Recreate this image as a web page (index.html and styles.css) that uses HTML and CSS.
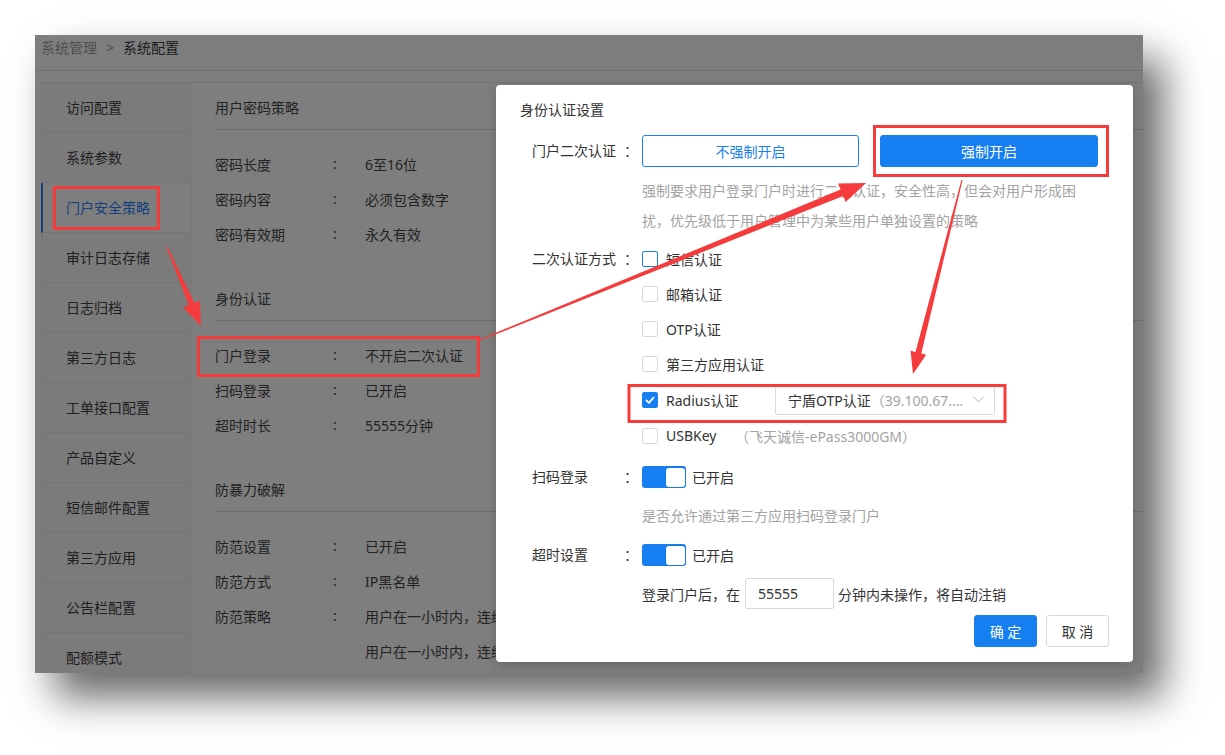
FILE: index.html
```html
<!DOCTYPE html>
<html lang="zh-CN">
<head>
  <meta charset="UTF-8" />
  <meta name="viewport" content="width=device-width,initial-scale=1.0" />
  <title>系统配置</title>
  <link rel="stylesheet" href="styles.css">
</head>
<body>
  <!-- Screenshot of the page, dimmed behind the dialog -->
  <div class="shot">
    <div class="crumb">
      <span class="crumb-parent">系统管理</span>
      <span class="crumb-sep">&gt;</span>
      <span class="crumb-current">系统配置</span>
    </div>

    <div class="main">
      <div class="side">
        <div class="side-item">访问配置</div>
        <div class="side-item">系统参数</div>
        <div class="side-item active">门户安全策略</div>
        <div class="side-item">审计日志存储</div>
        <div class="side-item">日志归档</div>
        <div class="side-item">第三方日志</div>
        <div class="side-item">工单接口配置</div>
        <div class="side-item">产品自定义</div>
        <div class="side-item">短信邮件配置</div>
        <div class="side-item">第三方应用</div>
        <div class="side-item">公告栏配置</div>
        <div class="side-item">配额模式</div>
      </div>

      <div class="panel">
        <div class="section">
          <div class="section-title">用户密码策略</div>
          <div class="info-list">
            <div class="info-row"><span class="info-label">密码长度</span><span class="info-colon">:</span><span>6至16位</span></div>
            <div class="info-row"><span class="info-label">密码内容</span><span class="info-colon">:</span><span>必须包含数字</span></div>
            <div class="info-row"><span class="info-label">密码有效期</span><span class="info-colon">:</span><span>永久有效</span></div>
          </div>
        </div>

        <div class="section">
          <div class="section-title">身份认证</div>
          <div class="info-list">
            <div class="info-row"><span class="info-label">门户登录</span><span class="info-colon">:</span><span>不开启二次认证</span></div>
            <div class="info-row"><span class="info-label">扫码登录</span><span class="info-colon">:</span><span>已开启</span></div>
            <div class="info-row"><span class="info-label">超时时长</span><span class="info-colon">:</span><span>55555分钟</span></div>
          </div>
        </div>

        <div class="section">
          <div class="section-title">防暴力破解</div>
          <div class="info-list">
            <div class="info-row"><span class="info-label">防范设置</span><span class="info-colon">:</span><span>已开启</span></div>
            <div class="info-row"><span class="info-label">防范方式</span><span class="info-colon">:</span><span>IP黑名单</span></div>
            <div class="info-row"><span class="info-label">防范策略</span><span class="info-colon">:</span><span>用户在一小时内，连续登录失败5次，锁定IP</span></div>
            <div class="info-row"><span class="info-label"></span><span class="info-colon"></span><span>用户在一小时内，连续登录失败10次，锁定账号</span></div>
          </div>
        </div>
      </div>
    </div>

    <!-- Dialog -->
    <div class="modal">
      <div class="modal-title">身份认证设置</div>

      <div class="form">
        <div class="form-row">
          <div class="form-label h32"><span class="form-name">门户二次认证</span><span class="form-colon">：</span></div>
          <div class="form-ctrl">
            <div class="choice">
              <button class="btn btn-line wide">不强制开启</button>
              <button class="btn btn-blue wide2">强制开启</button>
            </div>
            <div class="hint two-line">强制要求用户登录门户时进行二次认证，安全性高，但会对用户形成困扰，优先级低于用户管理中为某些用户单独设置的策略</div>
          </div>
        </div>

        <div class="form-row mt5">
          <div class="form-label h35"><span class="form-name">二次认证方式</span><span class="form-colon">：</span></div>
          <div class="form-ctrl">
            <div class="check"><span class="box focus"></span><span>短信认证</span></div>
            <div class="check"><span class="box"></span><span>邮箱认证</span></div>
            <div class="check"><span class="box"></span><span>OTP认证</span></div>
            <div class="check"><span class="box"></span><span>第三方应用认证</span></div>
            <div class="check tall">
              <span class="box on">
                <svg width="10" height="8" viewBox="0 0 10 8"><polyline points="1,4 4,6.8 9,1.2" fill="none" stroke="#fff" stroke-width="1.8"/></svg>
              </span>
              <span class="check-name">Radius认证</span>
              <div class="select">
                <span class="select-main">宁盾OTP认证</span><span class="select-sub">（39.100.67....</span>
                <svg class="select-arrow" width="11" height="7" viewBox="0 0 11 7"><polyline points="0.5,0.5 5.5,6 10.5,0.5" fill="none" stroke="#b8b8b8" stroke-width="1"/></svg>
              </div>
            </div>
            <div class="check"><span class="box"></span><span class="key-name">USBKey</span><span class="muted">（飞天诚信-ePass3000GM）</span></div>
          </div>
        </div>

        <div class="form-row mt13">
          <div class="form-label h22"><span class="form-name">扫码登录</span><span class="form-colon">：</span></div>
          <div class="form-ctrl">
            <div class="switch-line"><span class="switch"><span class="knob"></span></span><span>已开启</span></div>
            <div class="hint single">是否允许通过第三方应用扫码登录门户</div>
          </div>
        </div>

        <div class="form-row mt13">
          <div class="form-label h22"><span class="form-name">超时设置</span><span class="form-colon">：</span></div>
          <div class="form-ctrl">
            <div class="switch-line"><span class="switch"><span class="knob"></span></span><span>已开启</span></div>
            <div class="timeout">
              <span>登录门户后，在</span>
              <span class="input">55555</span>
              <span>分钟内未操作，将自动注销</span>
            </div>
          </div>
        </div>
      </div>

      <div class="modal-foot">
        <button class="btn btn-blue small">确 定</button>
        <button class="btn btn-plain small">取 消</button>
      </div>
    </div>
  </div>

  <!-- Red annotations drawn over the screenshot -->
  <svg class="notes" width="1225" height="755" viewBox="0 0 1225 755">
    <g fill="none" stroke="#f53b3b" stroke-width="3">
      <rect x="54.5" y="187.5" width="104" height="41"/>
      <rect x="198.5" y="337.5" width="280" height="38"/>
      <rect x="874.5" y="126.5" width="233" height="49"/>
      <rect x="629" y="385.5" width="376" height="36"/>
    </g>
    <g fill="#f53b3b">
      <polygon points="166.4,247.2 188.8,305.2 183.2,307.6 201,326 199.8,300.4 194.3,302.8 167.6,246.8"/>
      <polygon points="480.2,340.6 843.2,196.0 845.7,202.1 866,183 838.1,183.5 840.6,189.6 479.8,339.4"/>
      <polygon points="962.6,180.1 921.3,353.4 926.2,354.7 913,374 910.6,350.7 915.5,352.0 961.4,179.9"/>
    </g>
  </svg>
</body>
</html>
```

FILE: styles.css
```css
/* base */
body {
  margin: 0;
  position: relative;
  width: 1225px;
  height: 755px;
  overflow: hidden;
  background: #fff;
  font-family: "Noto Sans", "Noto Sans CJK SC", sans-serif;
  font-size: 14px;
  color: #333;
}

/* the dimmed screenshot */
.shot {
  position: relative;
  margin: 35px 0 0 35px;
  width: 1108px;
  height: 638px;
  overflow: hidden;
  background: #7e7e7e;
  box-shadow: 20px 24px 38px rgba(0, 0, 0, 0.6);
}

.crumb {
  height: 36px;
  box-sizing: border-box;
  padding: 3px 0 0 6px;
  line-height: 20px;
  border-bottom: 1px solid #6f6f6f;
  display: flex;
}
.crumb-parent { color: #4f4f4f; }
.crumb-sep {
  width: 26px;
  text-align: center;
  color: #4f4f4f;
}
.crumb-current { color: #1c1c1c; }

.main {
  margin: 11px 0 0 6px;
  display: flex;
  border-top: 1px solid #737373;
}

/* left menu */
.side {
  width: 150px;
  flex-shrink: 0;
  box-sizing: border-box;
  border-left: 1px solid #737373;
  border-right: 1px solid #737373;
  background: #7b7b7b;
}
.side-item {
  height: 50px;
  box-sizing: border-box;
  padding-left: 24px;
  line-height: 50px;
  border-bottom: 1px solid #747474;
  color: #202020;
}
.side-item.active {
  margin-left: -1px;
  padding-left: 23px;
  border-left: 2px solid #123f7e;
  background: #7e7e7e;
  color: #123f7e;
}

/* right panel */
.panel {
  flex: 1;
  padding-left: 24px;
}
.section + .section { margin-top: 23px; }
.section-title {
  padding: 15px 0 11px;
  line-height: 20px;
  border-bottom: 1px solid #6c6c6c;
  color: #222;
}
.info-list { padding-top: 16px; }
.info-row {
  display: flex;
  height: 35px;
  align-items: center;
  color: #222;
  white-space: nowrap;
}
.info-label { width: 118px; }
.info-colon { width: 32px; }

/* dialog */
.modal {
  position: absolute;
  left: 461px;
  top: 50px;
  width: 637px;
  height: 577px;
  box-sizing: border-box;
  padding: 15px 24px 0 24px;
  background: #fff;
  border-radius: 4px;
  box-shadow: 0 3px 12px rgba(0, 0, 0, 0.18);
}
.modal-title {
  line-height: 20px;
  color: #333;
}

.form {
  padding-left: 12px;
  margin-top: 15px;
}
.form-row {
  display: flex;
  align-items: flex-start;
}
.mt5 { margin-top: 5px; }
.mt13 { margin-top: 13px; }

.form-label {
  width: 110px;
  flex-shrink: 0;
  display: flex;
  color: #333;
}
.form-name { width: 92px; }
.form-colon { width: 14px; }
.h32 { line-height: 31px; }
.h35 { line-height: 35px; }
.h22 { line-height: 22px; }

.form-ctrl { flex: 1; }

.choice {
  display: flex;
  gap: 21px;
}

.btn {
  height: 32px;
  box-sizing: border-box;
  border-radius: 3px;
  font-family: inherit;
  font-size: 14px;
  padding: 0;
  cursor: pointer;
}
.btn-line {
  border: 1px solid #1680f2;
  background: #fff;
  color: #1680f2;
}
.btn-blue {
  border: 1px solid #1680f2;
  background: #1680f2;
  color: #fff;
}
.btn-plain {
  border: 1px solid #d9d9d9;
  background: #fff;
  color: #333;
}
.wide { width: 217px; }
.wide2 { width: 218px; }
.small { width: 63px; }

.hint {
  color: #a3a3a3;
  line-height: 30px;
}
.two-line {
  margin-top: 9px;
  width: 440px;
}
.single { margin-top: 13px; }

/* checkbox list */
.check {
  display: flex;
  align-items: center;
  height: 35px;
  color: #333;
  white-space: nowrap;
}
.check.tall { height: 37px; }
.box {
  width: 16px;
  height: 16px;
  box-sizing: border-box;
  border: 1px solid #d9d9d9;
  border-radius: 2px;
  margin-right: 8px;
  display: flex;
  align-items: center;
  justify-content: center;
  background: #fff;
}
.box.focus { border-color: #1680f2; }
.box.on {
  border-color: #1680f2;
  background: #1680f2;
}
.check-name { width: 109px; }
.key-name { width: 69px; }
.muted { color: #a3a3a3; }

.select {
  width: 220px;
  height: 30px;
  box-sizing: border-box;
  border: 1px solid #d9d9d9;
  border-radius: 2px;
  padding: 0 10px 0 12px;
  display: flex;
  align-items: center;
}
.select-main { color: #333; }
.select-sub {
  color: #a3a3a3;
  flex: 1;
}
.select-arrow { margin-left: 4px; }

/* switches */
.switch-line {
  display: flex;
  align-items: center;
  height: 22px;
  gap: 6px;
  color: #333;
}
.switch {
  width: 44px;
  height: 22px;
  box-sizing: border-box;
  padding: 1.5px;
  border-radius: 3px;
  background: #1680f2;
  display: flex;
  justify-content: flex-end;
}
.knob {
  width: 19px;
  height: 19px;
  border-radius: 3px;
  background: #fff;
  box-shadow: 0 0 2px rgba(0, 0, 0, 0.2);
}

.timeout {
  margin-top: 12px;
  display: flex;
  align-items: center;
  white-space: nowrap;
  color: #333;
}
.input {
  width: 89px;
  height: 31px;
  box-sizing: border-box;
  border: 1px solid #d9d9d9;
  border-radius: 2px;
  padding-left: 12px;
  margin: 0 4px 0 5px;
  line-height: 29px;
  color: #333;
}

.modal-foot {
  margin-top: 6px;
  display: flex;
  justify-content: flex-end;
  gap: 9px;
}

/* annotation layer */
.notes {
  position: absolute;
  left: 0;
  top: 0;
  pointer-events: none;
}
```
